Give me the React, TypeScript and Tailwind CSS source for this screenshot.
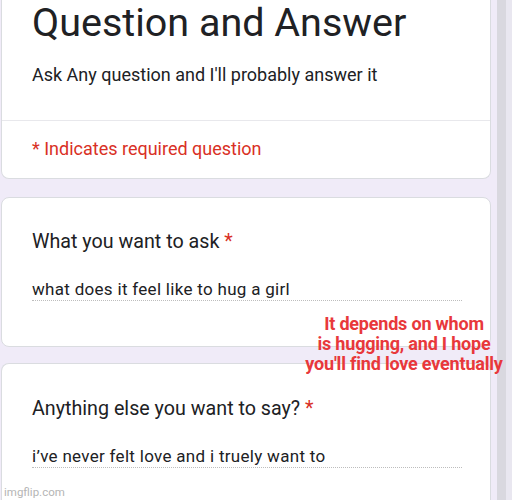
export default function App() {
  const font = { fontFamily: "Roboto, 'Noto Sans', Arial, sans-serif" };
  return (
    <div className="relative w-[512px] h-[500px] overflow-hidden bg-[#f0ebf8]" style={font}>
      <div className="flex h-full">
        <div className="w-[491px] pl-[1px] flex flex-col">
          {/* Header card */}
          <div className="bg-white rounded-b-lg border border-t-0 border-[#dadce0]">
            <div className="px-[30px] pb-[33px]">
              <h1 className="text-[39.5px] leading-[46px] text-[#202124]">Question and Answer</h1>
              <p className="mt-[17px] text-[18px] leading-[24px] text-[#202124]">
                Ask Any question and I'll probably answer it
              </p>
            </div>
            <div className="border-t border-[#e8e8ec] px-[30px] pt-[16px] pb-[17px]">
              <p className="text-[18px] leading-[24px] text-[#d93025]">* Indicates required question</p>
            </div>
          </div>

          {/* Question 1 */}
          <div className="mt-[18px] bg-white rounded-lg border border-[#dadce0] px-[30px] pt-[32px] pb-[45px]">
            <p className="text-[19.7px] leading-[24px] text-[#202124]">
              What you want to ask <span className="text-[#d93025]">*</span>
            </p>
            <div className="mt-[24px] w-[430px] border-b border-dotted border-[#bdbdbd]">
              <p className="text-[17px] leading-[22px] text-[#202124] tracking-[0.3px]">
                what does it feel like to hug a girl
              </p>
            </div>
          </div>

          {/* Question 2 */}
          <div className="mt-[16px] bg-white rounded-t-lg border border-b-0 border-[#dadce0] px-[30px] pt-[33px] flex-1">
            <p className="text-[19.7px] leading-[24px] text-[#202124]">
              Anything else you want to say? <span className="text-[#d93025]">*</span>
            </p>
            <div className="mt-[24px] w-[430px] border-b border-dotted border-[#bdbdbd]">
              <p className="text-[17px] leading-[22px] text-[#202124] tracking-[0.3px]">
                i’ve never felt love and i truely want to
              </p>
            </div>
          </div>
        </div>
        <div className="w-[6px]" />
        <div className="w-[9px] bg-[#d9d8df]" />
        <div className="flex-1 bg-[#e9e7f0]" />
      </div>

      {/* Overlay caption */}
      <div className="absolute left-[290px] top-[314px] w-[228px] text-center text-[18px] leading-[20px] font-bold text-[#e8383b] tracking-[-0.2px]">
        It depends on whom
        <br />
        is hugging, and I hope
        <br />
        you'll find love eventually
      </div>

      <div className="absolute left-[4px] top-[484px] text-[11.5px] leading-[16px] text-[#b5b5b5]">imgflip.com</div>
    </div>
  );
}
